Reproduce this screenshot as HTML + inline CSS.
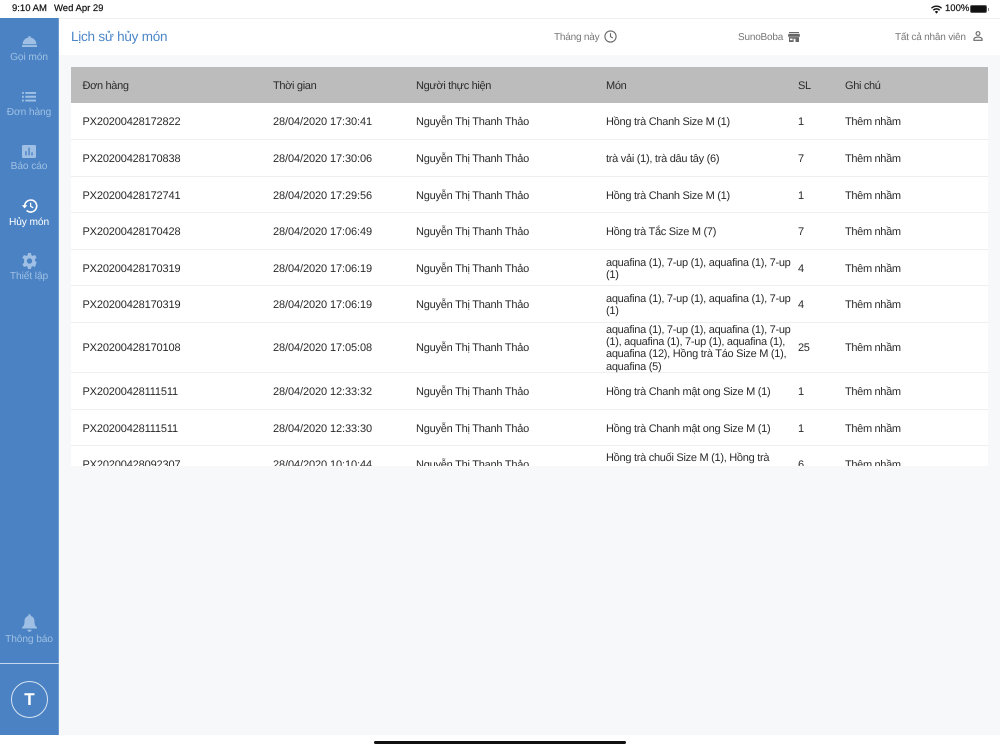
<!DOCTYPE html>
<html><head><meta charset="utf-8"><style>
*{box-sizing:border-box}
html,body{margin:0;padding:0;width:1000px;height:750px;overflow:hidden;background:#fff;font-family:"Liberation Sans",sans-serif;text-rendering:geometricPrecision}
.a{position:absolute;white-space:nowrap}
#main{position:absolute;left:59px;top:55px;width:941px;height:680px;background:#f7f8fa}
#side{position:absolute;left:0;top:18px;width:59px;height:717px;background:#4a82c3;border-right:1px solid #6d9ad0}
.nav{position:absolute;left:0;width:58px;text-align:center;font-size:10.2px;letter-spacing:-.1px;color:#9fc0e4;white-space:nowrap}
.nav.on{color:#fff}
#tbl{position:absolute;left:71px;top:67px;width:917px;height:399px;overflow:hidden;background:#fff}
.hd{position:absolute;left:0;top:0;width:917px;height:36px;background:#bcbcbc}
.row{position:absolute;left:0;width:917px;border-bottom:1px solid #efeff1;background:#fff}
.c{position:absolute;font-size:11px;letter-spacing:-.33px;color:#2a2a2a;white-space:nowrap;line-height:12.4px}
.p{letter-spacing:-.15px}
.t{letter-spacing:-.1px}
.n{letter-spacing:-.24px}
.m{width:192px;white-space:normal;letter-spacing:-.28px}
.top{top:32px;font-size:10px;letter-spacing:-.2px;color:#777}
.st{top:3px;font-size:9.5px;color:#111;-webkit-text-stroke:.2px #111}
</style></head><body>
<div class="a st" style="left:12px">9:10 AM</div>
<div class="a st" style="left:54px">Wed Apr 29</div>
<svg class="a" style="left:931px;top:5px" width="11" height="9" viewBox="0 0 11 9"><path d="M5.5 8.6 3.8 6.700a2.500 2.500 0 0 1 3.400 0zM2.800 5.700 1.800 4.600a5.500 5.500 0 0 1 7.400 0L8.200 5.700a4 4 0 0 0-5.400 0zM.9 3.700 0 2.700a8 8 0 0 1 11 0l-.9 1a6.700 6.700 0 0 0-9.200 0z" fill="#111"/></svg>
<div class="a st" style="left:945px">100%</div>
<div class="a" style="left:970px;top:5px;width:17px;height:8px;background:#111;border-radius:2px;border:1px solid #555"></div>
<div class="a" style="left:988px;top:8px;width:1px;height:3px;background:#888"></div>
<div class="a" style="left:0;top:18px;width:1000px;height:1px;background:#eeeeee"></div>

<div id="main"></div>

<div class="a" style="left:71px;top:29px;font-size:13.500px;letter-spacing:-.24px;color:#4a86c8">Lịch sử hủy món</div>
<div class="a top" style="left:554px">Tháng này</div>
<svg class="a" style="left:604px;top:30px" width="13" height="13" viewBox="0 0 13 13"><circle cx="6.5" cy="6.5" r="5.6" fill="none" stroke="#666" stroke-width="1.1"/><path d="M6.500 3.200v3.400l2.300 1.400" fill="none" stroke="#666" stroke-width="1.1"/></svg>
<div class="a top" style="left:738px">SunoBoba</div>
<svg class="a" style="left:788px;top:32px" width="12" height="10" viewBox="0 0 12 11" preserveAspectRatio="none"><path d="M1 0h10v1.300H1zM.3 2h11.400l.3 3.200H0zM1 5.600h10V11H7.500V7.400H5.600V11H1z" fill="#666"/><rect x="2" y="7.200" width="2.600" height="1.800" fill="#fff"/></svg>
<div class="a top" style="left:895px">Tất cả nhân viên</div>
<svg class="a" style="left:973px;top:31px" width="10" height="10" viewBox="0 0 11 11"><circle cx="5.500" cy="2.800" r="2.100" fill="none" stroke="#666" stroke-width="1.200"/><path d="M1 10.200V9c0-1.500 2.500-2.300 4.500-2.300S10 7.500 10 9v1.200z" fill="none" stroke="#666" stroke-width="1.200"/></svg>

<div id="side">
<svg class="a" style="left:22px;top:18px" width="15" height="11" viewBox="0 0 16 12" preserveAspectRatio="none"><path d="M7 0h2v1.600a7.400 7.400 0 0 1 6.300 7.400H.7A7.400 7.400 0 0 1 7 1.600zM0 10h16v2H0z" fill="#9fc0e4"/></svg>
<div class="nav" style="top:33.500px">Gọi món</div>
<svg class="a" style="left:22px;top:74px" width="14" height="9.500" viewBox="0 0 15 10" preserveAspectRatio="none"><path d="M0 0h2v2H0zM3.500 0H15v2H3.500zM0 4h2v2H0zM3.500 4H15v2H3.500zM0 8h2v2H0zM3.500 8H15v2H3.500z" fill="#9fc0e4"/></svg>
<div class="nav" style="top:88.500px">Đơn hàng</div>
<svg class="a" style="left:22px;top:127px" width="14" height="13" viewBox="0 0 15 15" preserveAspectRatio="none"><path fill-rule="evenodd" d="M1.500 0h12A1.500 1.500 0 0 1 15 1.500v12a1.500 1.500 0 0 1-1.500 1.500h-12A1.500 1.500 0 0 1 0 13.500v-12A1.500 1.500 0 0 1 1.500 0zM3.500 7v5H5V7zM6.800 3v9h1.500V3zM10 8.500V12h1.500V8.500z" fill="#9fc0e4"/></svg>
<div class="nav" style="top:143px">Báo cáo</div>
<svg class="a" style="left:21px;top:181px" width="17" height="14" viewBox="0 0 17 14"><path d="M3.700 7a6 6 0 1 1 1.900 4.400" fill="none" stroke="#fff" stroke-width="1.600"/><path d="M0.800 6.200h5.600L3.600 9.400z" fill="#fff"/><path d="M9.600 3.800v3.500l2.600 1.500" fill="none" stroke="#fff" stroke-width="1.300"/></svg>
<div class="nav on" style="top:198.500px">Hủy món</div>
<svg class="a" style="left:22px;top:235px" width="15" height="16" viewBox="0 0 15 16"><path fill-rule="evenodd" d="M6 0h3l.4 2.200 1.500.7L13 2l1.600 2.700-1.700 1.500v1.600l1.700 1.500L13 14l-2.100-.9-1.500.7L9 16H6l-.4-2.200-1.500-.7L2 14 .4 11.300 2.100 9.800V6.200L.4 4.700 2 2l2.100.9 1.500-.7zM7.500 5.300a2.700 2.700 0 1 0 0 5.400 2.700 2.700 0 0 0 0-5.400z" fill="#9fc0e4"/></svg>
<div class="nav" style="top:252.500px">Thiết lập</div>
<svg class="a" style="left:22px;top:596px" width="15" height="18" viewBox="0 0 15 18"><path d="M6.300 1.300a1.200 1.200 0 0 1 2.400 0v.7c2.500.6 3.800 2.700 3.800 5.500 0 3 .7 4.500 2.500 6v1H0v-1c1.800-1.500 2.500-3 2.500-6 0-2.800 1.300-4.900 3.800-5.500zM5.500 15.800h4a2 2 0 0 1-4 0z" fill="#9fc0e4"/></svg>
<div class="nav" style="top:616px">Thông báo</div>
<div class="a" style="left:0;top:645px;width:59px;height:1px;background:#c5d8ee"></div>
<div class="a" style="left:11px;top:663px;width:37px;height:37px;border:1px solid #d6e3f2;border-radius:50%;color:#fff;font-size:17px;font-weight:bold;text-align:center;line-height:35px">T</div>
</div>

<div id="tbl">
<div class="hd">
<div class="c" style="left:11.500px;top:12.500px">Đơn hàng</div><div class="c" style="left:202px;top:12.500px">Thời gian</div><div class="c" style="left:345px;top:12.500px">Người thực hiện</div><div class="c" style="left:535px;top:12.500px">Món</div><div class="c" style="left:727px;top:12.500px">SL</div><div class="c" style="left:774px;top:12.500px">Ghi chú</div>
</div>
<div class="row" style="top:36px;height:37px"><div class="c p" style="left:11.500px;top:12.500px">PX20200428172822</div><div class="c t" style="left:202px;top:12.500px">28/04/2020 17:30:41</div><div class="c n" style="left:345px;top:12.500px">Nguyễn Thị Thanh Thảo</div><div class="c m" style="left:535px;top:12.500px">Hồng trà Chanh Size M (1)</div><div class="c" style="left:727px;top:12.500px">1</div><div class="c" style="left:774px;top:12.500px">Thêm nhầm</div></div>
<div class="row" style="top:73px;height:37px"><div class="c p" style="left:11.500px;top:12.500px">PX20200428170838</div><div class="c t" style="left:202px;top:12.500px">28/04/2020 17:30:06</div><div class="c n" style="left:345px;top:12.500px">Nguyễn Thị Thanh Thảo</div><div class="c m" style="left:535px;top:12.500px">trà vải (1), trà dâu tây (6)</div><div class="c" style="left:727px;top:12.500px">7</div><div class="c" style="left:774px;top:12.500px">Thêm nhầm</div></div>
<div class="row" style="top:110px;height:36px"><div class="c p" style="left:11.500px;top:12.500px">PX20200428172741</div><div class="c t" style="left:202px;top:12.500px">28/04/2020 17:29:56</div><div class="c n" style="left:345px;top:12.500px">Nguyễn Thị Thanh Thảo</div><div class="c m" style="left:535px;top:12.500px">Hồng trà Chanh Size M (1)</div><div class="c" style="left:727px;top:12.500px">1</div><div class="c" style="left:774px;top:12.500px">Thêm nhầm</div></div>
<div class="row" style="top:146px;height:37px"><div class="c p" style="left:11.500px;top:12.500px">PX20200428170428</div><div class="c t" style="left:202px;top:12.500px">28/04/2020 17:06:49</div><div class="c n" style="left:345px;top:12.500px">Nguyễn Thị Thanh Thảo</div><div class="c m" style="left:535px;top:12.500px">Hồng trà Tắc Size M (7)</div><div class="c" style="left:727px;top:12.500px">7</div><div class="c" style="left:774px;top:12.500px">Thêm nhầm</div></div>
<div class="row" style="top:183px;height:36px"><div class="c p" style="left:11.500px;top:12.500px">PX20200428170319</div><div class="c t" style="left:202px;top:12.500px">28/04/2020 17:06:19</div><div class="c n" style="left:345px;top:12.500px">Nguyễn Thị Thanh Thảo</div><div class="c m" style="left:535px;top:7px">aquafina (1), 7-up (1), aquafina (1), 7-up (1)</div><div class="c" style="left:727px;top:12.500px">4</div><div class="c" style="left:774px;top:12.500px">Thêm nhầm</div></div>
<div class="row" style="top:219px;height:37px"><div class="c p" style="left:11.500px;top:12.500px">PX20200428170319</div><div class="c t" style="left:202px;top:12.500px">28/04/2020 17:06:19</div><div class="c n" style="left:345px;top:12.500px">Nguyễn Thị Thanh Thảo</div><div class="c m" style="left:535px;top:7px">aquafina (1), 7-up (1), aquafina (1), 7-up (1)</div><div class="c" style="left:727px;top:12.500px">4</div><div class="c" style="left:774px;top:12.500px">Thêm nhầm</div></div>
<div class="row" style="top:256px;height:50px"><div class="c p" style="left:11.500px;top:18.500px">PX20200428170108</div><div class="c t" style="left:202px;top:18.500px">28/04/2020 17:05:08</div><div class="c n" style="left:345px;top:18.500px">Nguyễn Thị Thanh Thảo</div><div class="c m" style="left:535px;top:.5px">aquafina (1), 7-up (1), aquafina (1), 7-up (1), aquafina (1), 7-up (1), aquafina (1), aquafina (12), Hồng trà Táo Size M (1), aquafina (5)</div><div class="c" style="left:727px;top:18.500px">25</div><div class="c" style="left:774px;top:18.500px">Thêm nhầm</div></div>
<div class="row" style="top:306px;height:37px"><div class="c p" style="left:11.500px;top:12.500px">PX20200428111511</div><div class="c t" style="left:202px;top:12.500px">28/04/2020 12:33:32</div><div class="c n" style="left:345px;top:12.500px">Nguyễn Thị Thanh Thảo</div><div class="c m" style="left:535px;top:12.500px">Hồng trà Chanh mật ong Size M (1)</div><div class="c" style="left:727px;top:12.500px">1</div><div class="c" style="left:774px;top:12.500px">Thêm nhầm</div></div>
<div class="row" style="top:343px;height:36px"><div class="c p" style="left:11.500px;top:12.500px">PX20200428111511</div><div class="c t" style="left:202px;top:12.500px">28/04/2020 12:33:30</div><div class="c n" style="left:345px;top:12.500px">Nguyễn Thị Thanh Thảo</div><div class="c m" style="left:535px;top:12.500px">Hồng trà Chanh mật ong Size M (1)</div><div class="c" style="left:727px;top:12.500px">1</div><div class="c" style="left:774px;top:12.500px">Thêm nhầm</div></div>
<div class="row" style="top:379px;height:37px"><div class="c p" style="left:11.500px;top:12.500px">PX20200428092307</div><div class="c t" style="left:202px;top:12.500px">28/04/2020 10:10:44</div><div class="c n" style="left:345px;top:12.500px">Nguyễn Thị Thanh Thảo</div><div class="c m" style="left:535px;top:6px">Hồng trà chuối Size M (1), Hồng trà</div><div class="c" style="left:727px;top:12.500px">6</div><div class="c" style="left:774px;top:12.500px">Thêm nhầm</div></div>
</div>
<div class="a" style="left:374px;top:741px;width:252px;height:3px;background:#111;border-radius:2px"></div>
</body></html>
